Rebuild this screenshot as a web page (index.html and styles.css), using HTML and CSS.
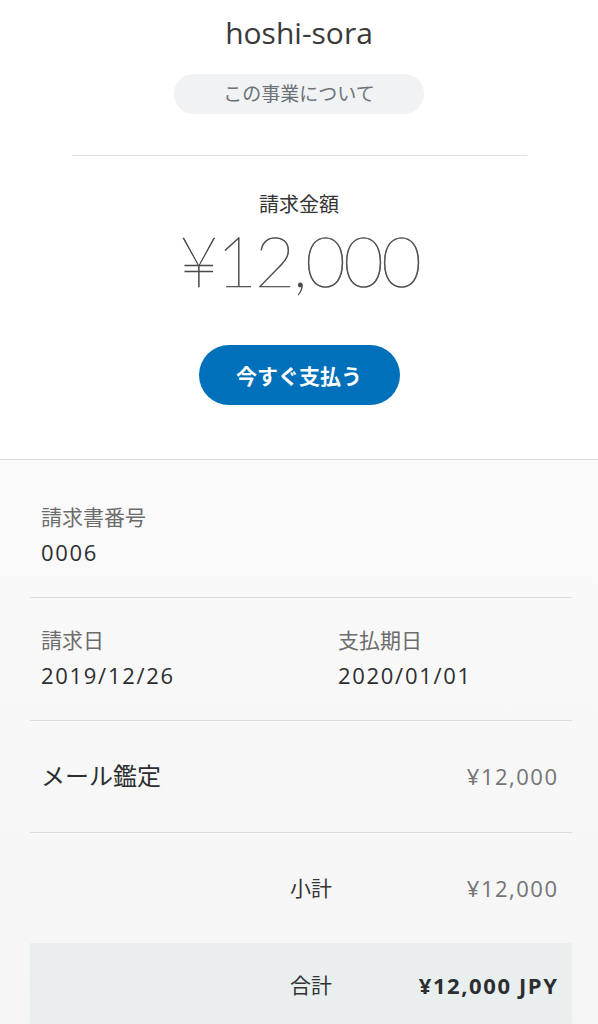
FILE: index.html
```html
<!DOCTYPE html>
<html lang="ja">
<head>
<meta charset="utf-8">
<title>hoshi-sora 請求書</title>
<link rel="stylesheet" href="styles.css">
</head>
<body>
<header class="top">
  <h1 class="merchant">hoshi-sora</h1>
  <div class="about">この事業について</div>
  <hr class="divider">
  <div class="amount-label">請求金額</div>
  <div class="amount">¥12,000</div>
  <button class="pay">今すぐ支払う</button>
</header>
<main class="details">
  <section class="row row-number">
    <div class="field">
      <div class="label">請求書番号</div>
      <div class="value">0006</div>
    </div>
  </section>
  <section class="row row-dates">
    <div class="field">
      <div class="label">請求日</div>
      <div class="value">2019/12/26</div>
    </div>
    <div class="field">
      <div class="label">支払期日</div>
      <div class="value">2020/01/01</div>
    </div>
  </section>
  <section class="row row-item">
    <div class="item-name">メール鑑定</div>
    <div class="item-price">¥12,000</div>
  </section>
  <section class="row row-subtotal">
    <div class="sum-label">小計</div>
    <div class="sum-value">¥12,000</div>
  </section>
  <section class="total">
    <div class="sum-label">合計</div>
    <div class="total-value">¥12,000 JPY</div>
  </section>
</main>
</body>
</html>
```
FILE: styles.css
```css
html, body {
  margin: 0;
  padding: 0;
}
body {
  background: #f6f6f6;
  font-family: "Open Sans", "Noto Sans CJK JP", sans-serif;
  color: #2c2e2f;
}
.top {
  background: #fff;
  border-bottom: 1px solid #dcdcdc;
  display: flex;
  flex-direction: column;
  align-items: center;
  padding: 13px 0 54px;
}
.merchant {
  margin: 0;
  font-size: 30px;
  font-weight: 400;
  line-height: 40px;
  color: #3a3a3a;
}
.about {
  margin-top: 21px;
  width: 250px;
  height: 40px;
  line-height: 40px;
  border-radius: 20px;
  background: #f0f2f3;
  text-align: center;
  font-size: 19px;
  color: #6c7378;
}
.divider {
  margin: 41px 0 0;
  width: 455px;
  border: 0;
  height: 1px;
  background: #dedede;
}
.amount-label {
  margin-top: 36px;
  font-size: 20px;
  line-height: 26px;
  color: #333;
}
.amount {
  margin-top: 5px;
  font-family: "Lato", "Open Sans", sans-serif;
  font-size: 70px;
  font-weight: 200;
  line-height: 74px;
  letter-spacing: -2.5px;
  color: #4a4a4a;
  -webkit-text-stroke: 0.6px #4a4a4a;
}
.pay {
  margin-top: 48px;
  width: 201px;
  height: 60px;
  border: 0;
  border-radius: 30px;
  background: #0070ba;
  color: #fff;
  font-family: "Open Sans", "Noto Sans CJK JP", sans-serif;
  font-size: 21px;
  font-weight: 700;
  padding: 0;
}
.details {
  background: linear-gradient(#fafafa, #f5f5f5);
  padding: 0 26px 0 30px;
}
.row {
  border-bottom: 1px solid #dddddd;
  padding-left: 11px;
  padding-right: 15px;
}
.row-number {
  padding-top: 44px;
  padding-bottom: 31px;
}
.row-dates {
  display: grid;
  grid-template-columns: 297px 1fr;
  padding-top: 29px;
  padding-bottom: 31px;
}
.field {
  display: flex;
  flex-direction: column;
  gap: 8px;
}
.label {
  font-size: 21px;
  line-height: 26px;
  color: #6c6c6c;
}
.value {
  font-size: 22px;
  line-height: 28px;
  letter-spacing: 1.7px;
  color: #2c2e2f;
}
.row-item {
  display: flex;
  justify-content: space-between;
  align-items: center;
  padding-top: 40px;
  padding-bottom: 41px;
}
.item-name {
  font-size: 24px;
  line-height: 30px;
  color: #2c2e2f;
}
.item-price, .sum-value {
  font-size: 22px;
  line-height: 28px;
  letter-spacing: 1.5px;
  margin-right: -1.5px;
  color: #747474;
}
.row-subtotal {
  border-bottom: 0;
  display: flex;
  justify-content: space-between;
  align-items: center;
  padding-left: 260px;
  padding-top: 41px;
  padding-bottom: 41px;
}
.sum-label {
  font-size: 21px;
  line-height: 28px;
  color: #333;
}
.total {
  background: #e9eeef;
  display: flex;
  justify-content: space-between;
  align-items: center;
  padding: 28px 15px 28px 260px;
}
.total-value {
  font-size: 22px;
  line-height: 28px;
  font-weight: 700;
  letter-spacing: 1.6px;
  margin-right: -1.6px;
  color: #2c2e2f;
}
```
